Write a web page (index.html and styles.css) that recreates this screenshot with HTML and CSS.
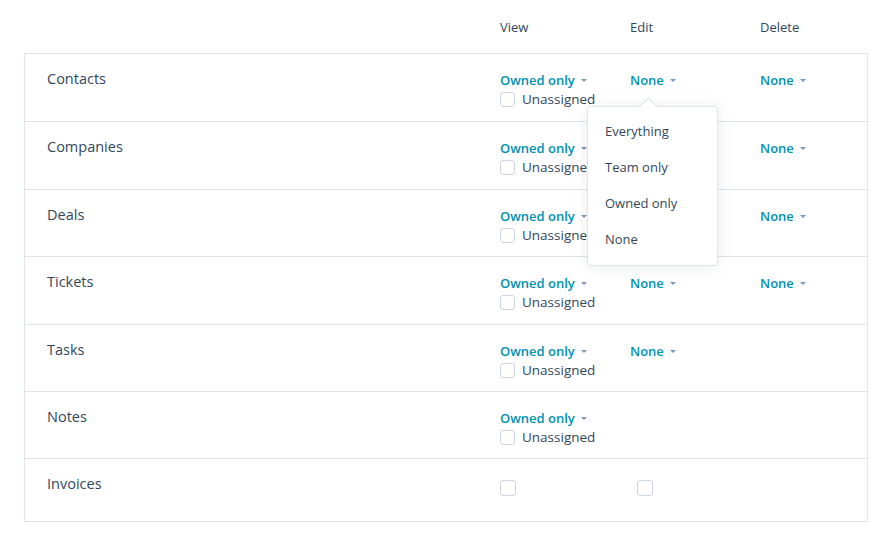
FILE: index.html
```html
<!DOCTYPE html>
<html>
<head>
<meta charset="utf-8">
<link rel="stylesheet" href="styles.css">
</head>
<body>
<div class="page">
  <div class="head">
    <div class="h-label"></div>
    <div class="h-col">View</div>
    <div class="h-col">Edit</div>
    <div class="h-col">Delete</div>
  </div>
  <div class="table">
    <div class="row">
      <div class="label">Contacts</div>
      <div class="cell">
        <div class="dd">Owned only <span class="caret"></span></div>
        <label class="chk"><span class="box"></span>Unassigned</label>
      </div>
      <div class="cell open">
        <div class="dd">None <span class="caret"></span></div>
        <div class="menu">
          <div class="item">Everything</div>
          <div class="item">Team only</div>
          <div class="item">Owned only</div>
          <div class="item">None</div>
        </div>
      </div>
      <div class="cell"><div class="dd">None <span class="caret"></span></div></div>
    </div>
    <div class="row">
      <div class="label">Companies</div>
      <div class="cell">
        <div class="dd">Owned only <span class="caret"></span></div>
        <label class="chk"><span class="box"></span>Unassigned</label>
      </div>
      <div class="cell"><div class="dd hidden">None <span class="caret"></span></div></div>
      <div class="cell"><div class="dd">None <span class="caret"></span></div></div>
    </div>
    <div class="row">
      <div class="label">Deals</div>
      <div class="cell">
        <div class="dd">Owned only <span class="caret"></span></div>
        <label class="chk"><span class="box"></span>Unassigned</label>
      </div>
      <div class="cell"><div class="dd hidden">None <span class="caret"></span></div></div>
      <div class="cell"><div class="dd">None <span class="caret"></span></div></div>
    </div>
    <div class="row">
      <div class="label">Tickets</div>
      <div class="cell">
        <div class="dd">Owned only <span class="caret"></span></div>
        <label class="chk"><span class="box"></span>Unassigned</label>
      </div>
      <div class="cell"><div class="dd">None <span class="caret"></span></div></div>
      <div class="cell"><div class="dd">None <span class="caret"></span></div></div>
    </div>
    <div class="row">
      <div class="label">Tasks</div>
      <div class="cell">
        <div class="dd">Owned only <span class="caret"></span></div>
        <label class="chk"><span class="box"></span>Unassigned</label>
      </div>
      <div class="cell"><div class="dd">None <span class="caret"></span></div></div>
      <div class="cell"></div>
    </div>
    <div class="row">
      <div class="label">Notes</div>
      <div class="cell">
        <div class="dd">Owned only <span class="caret"></span></div>
        <label class="chk"><span class="box"></span>Unassigned</label>
      </div>
      <div class="cell"></div>
      <div class="cell"></div>
    </div>
    <div class="row last">
      <div class="label">Invoices</div>
      <div class="cell"><span class="box solo"></span></div>
      <div class="cell"><span class="box solo shift"></span></div>
      <div class="cell"></div>
    </div>
  </div>
</div>
</body>
</html>
```

FILE: styles.css
```css
* { box-sizing: border-box; }
html, body { margin: 0; padding: 0; background: #fff; }
body {
  font-family: "Open Sans", "Noto Sans", sans-serif;
  color: #33475b;
  font-size: 14px;
}
.page {
  width: 896px;
  height: 544px;
  padding: 0 28px 0 24px;
}
.head {
  display: grid;
  grid-template-columns: 476px 130px 130px 1fr;
  height: 53px;
  align-items: center;
  font-size: 13px;
}
.h-col { padding-top: 1px; }
.table {
  border: 1px solid #dfe3eb;
  width: 844px;
}
.row {
  display: grid;
  grid-template-columns: 475px 130px 130px 1fr;
  border-bottom: 1px solid #dfe3eb;
  height: 68px;
  padding-top: 16px;
}
.row:nth-child(3), .row:nth-child(5), .row:nth-child(6) { height: 67px; }
.row.last { border-bottom: none; height: 62px; }
.label {
  padding-left: 22px;
  line-height: 18px;
  font-size: 14.5px;
}
.cell { position: relative; }
.dd {
  color: #0091ae;
  font-weight: 600;
  font-size: 13px;
  line-height: 20px;
  display: flex;
  align-items: center;
  gap: 4px;
  white-space: nowrap;
}
.dd.hidden { visibility: hidden; }
.caret {
  width: 0;
  height: 0;
  border-left: 3px solid transparent;
  border-right: 3px solid transparent;
  border-top: 3px solid #7c98b6;
  margin-left: 2px;
}
.chk {
  display: flex;
  align-items: center;
  gap: 7px;
  line-height: 19px;
  font-size: 13.5px;
  white-space: nowrap;
}
.box {
  display: inline-block;
  width: 15px;
  height: 15px;
  border: 1px solid #cbd6e2;
  border-radius: 3px;
  background: #fff;
}
.box.solo { margin-top: 5px; width: 16px; height: 16px; }
.box.shift { margin-left: 7px; }
.menu {
  position: absolute;
  left: -43px;
  top: 36px;
  width: 131px;
  background: #fff;
  border: 1px solid #dfe3eb;
  border-radius: 3px;
  box-shadow: 0 1px 16px rgba(45, 62, 80, 0.10);
  padding: 6px 0 8px;
  z-index: 5;
  font-size: 13px;
}
.menu::before {
  content: "";
  position: absolute;
  left: 54px;
  top: -7px;
  width: 12px;
  height: 12px;
  background: #fff;
  border-left: 1px solid #dfe3eb;
  border-top: 1px solid #dfe3eb;
  transform: rotate(45deg);
}
.item {
  height: 36px;
  line-height: 36px;
  padding-left: 17px;
}
```
